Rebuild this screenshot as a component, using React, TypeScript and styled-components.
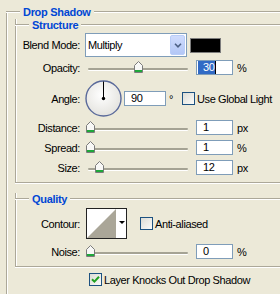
import React from 'react';
import styled, { createGlobalStyle } from 'styled-components';

const GlobalStyle = createGlobalStyle`
  html, body {
    margin: 0;
    padding: 0;
  }
  body {
    width: 280px;
    height: 294px;
    overflow: hidden;
    background: #ece9d8;
    font-family: 'Liberation Sans', Arial, sans-serif;
    font-size: 11px;
    letter-spacing: -0.4px;
    color: #000;
  }
`;

const Page = styled.div`
  box-sizing: border-box;
  height: 294px;
  padding: 11px 0 0 6px;
  display: flex;
  flex-direction: column;
`;

const Group = styled.section<{ $mt?: number; $ml?: number; $open?: boolean }>`
  margin: ${(p) => p.$mt ?? 0}px 0 0 ${(p) => p.$ml ?? 0}px;
  border-left: 1px solid #aca899;
  border-bottom: ${(p) => (p.$open ? 'none' : '1px solid #aca899')};
  box-shadow: inset 1px 0 #fff, 0 1px #fff;
  padding-bottom: ${(p) => (p.$open ? 0 : 7)}px;
  flex: ${(p) => (p.$open ? 1 : 'none')};
`;

const Legend = styled.header`
  display: flex;
  align-items: center;
  height: 12px;
  margin: -5px 0 0 -1px;

  &::before,
  &::after {
    content: '';
    height: 0;
    border-top: 1px solid #aca899;
    border-bottom: 1px solid #fff;
  }
  &::before {
    width: 14px;
  }
  &::after {
    flex: 1;
  }
`;

const LegendText = styled.span`
  padding: 0 3px;
  line-height: 12px;
  font-weight: bold;
  letter-spacing: -0.3px;
  color: #0046d5;
`;

const Row = styled.div<{ $h: number; $mt: number }>`
  display: grid;
  grid-template-columns: 69px 111px 37px 1fr;
  align-items: center;
  height: ${(p) => p.$h}px;
  margin-top: ${(p) => p.$mt}px;
`;

const Label = styled.span`
  text-align: right;
  padding-right: 5px;
  white-space: nowrap;
`;

const Wide = styled.div`
  grid-column: 2 / -1;
  display: flex;
  align-items: center;
`;

const Select = styled.div`
  box-sizing: border-box;
  width: 102px;
  height: 24px;
  padding: 1px;
  border: 1px solid #7f9db9;
  background: #fff;
  display: flex;
  align-items: center;
`;

const SelectValue = styled.span`
  flex: 1;
  padding-left: 1px;
`;

const SelectButton = styled.span`
  box-sizing: border-box;
  width: 15px;
  height: 20px;
  border: 1px solid #b9cdf8;
  border-radius: 2px;
  background: linear-gradient(#cfdcfd, #b3c7f6);
  display: flex;
  align-items: center;
  justify-content: center;
`;

const Swatch = styled.span`
  box-sizing: border-box;
  width: 31px;
  height: 15px;
  margin-left: 3px;
  border: 1px solid #7d7d7d;
  background: #000;
`;

const Field = styled.div<{ $w?: number }>`
  box-sizing: border-box;
  width: ${(p) => p.$w ?? 37}px;
  height: 15px;
  border: 1px solid #7f9db9;
  background: #fff;
  padding-left: 6px;
  line-height: 13px;
  white-space: nowrap;
`;

const SelectedText = styled.span`
  display: inline-block;
  margin-left: -5px;
  padding: 0 1px 0 5px;
  background: #316ac5;
  color: #fff;
  border-right: 1px solid #000;
`;

const Unit = styled.span`
  padding-left: 4px;
`;

const Degree = styled.span`
  margin-left: 3px;
`;

const Slider = styled.div`
  position: relative;
  height: 15px;
`;

const Track = styled.div`
  width: 100px;
  height: 2px;
  margin: 8px 0 0 3px;
  border-radius: 1px;
  background: #a5a394;
  box-shadow: 0 1px #fff;
`;

const Thumb = styled.svg`
  position: absolute;
  top: 1px;
`;

const CheckLabel = styled.label<{ $ml?: number }>`
  display: flex;
  align-items: center;
  margin-left: ${(p) => p.$ml ?? 0}px;
  white-space: nowrap;
`;

const Box = styled.span`
  box-sizing: border-box;
  width: 13px;
  height: 13px;
  margin-right: 2px;
  border: 1px solid #1c5180;
  background: linear-gradient(135deg, #dcdcd5, #fbfbf9);
  display: flex;
  align-items: center;
  justify-content: center;
`;

const ContourBox = styled.div`
  box-sizing: border-box;
  width: 41px;
  height: 31px;
  margin-left: 1px;
  border: 1px solid #222;
  background: #fff;
  display: flex;
`;

const ContourArrow = styled.span`
  margin: 12px 0 0 3px;
  width: 0;
  height: 0;
  border-left: 3px solid transparent;
  border-right: 3px solid transparent;
  border-top: 3px solid #000;
`;

const Footer = styled.div`
  margin: 6px 0 0 82px;
  height: 13px;
  display: flex;
`;

const Check: React.FC<{ label: string; checked?: boolean; ml?: number }> = ({ label, checked, ml }) => (
  <CheckLabel $ml={ml}>
    <Box>
      {checked && (
        <svg width="9" height="9" viewBox="0 0 9 9">
          <path d="M1 4.2 L3.4 6.6 L8 1.8" fill="none" stroke="#21a121" strokeWidth="2" />
        </svg>
      )}
    </Box>
    {label}
  </CheckLabel>
);

const SliderControl: React.FC<{ pos: number }> = ({ pos }) => (
  <Slider>
    <Track />
    <Thumb width="9" height="12" viewBox="0 0 9 12" style={{ left: 1 + pos * 96 }}>
      <path d="M4.5 0.5 L8.5 4.5 V11.5 H0.5 V4.5 Z" fill="#f8f8f6" stroke="#7b7b7b" />
      <rect x="1" y="9" width="7" height="2" fill="#1ea73a" />
    </Thumb>
  </Slider>
);

type SliderRow = { label: string; value: string; unit: string; pos: number; mt: number; selected?: boolean };

const SliderLine: React.FC<SliderRow> = ({ label, value, unit, pos, mt, selected }) => (
  <Row $h={15} $mt={mt}>
    <Label>{label}</Label>
    <SliderControl pos={pos} />
    <Field>{selected ? <SelectedText>{value}</SelectedText> : value}</Field>
    <Unit>{unit}</Unit>
  </Row>
);

const lower: SliderRow[] = [
  { label: 'Distance:', value: '1', unit: 'px', pos: 0, mt: 3 },
  { label: 'Spread:', value: '1', unit: '%', pos: 0, mt: 5 },
  { label: 'Size:', value: '12', unit: 'px', pos: 0.09, mt: 5 },
];

const Dial = () => (
  <svg width="37" height="37" viewBox="0 0 37 37">
    <defs>
      <radialGradient id="dialFill" cx="45%" cy="40%" r="65%">
        <stop offset="0%" stopColor="#ffffff" />
        <stop offset="100%" stopColor="#e2e1dc" />
      </radialGradient>
    </defs>
    <circle cx="18.5" cy="18.5" r="17.5" fill="url(#dialFill)" stroke="#59699a" strokeWidth="1.4" />
    <line x1="18.5" y1="18.5" x2="18.5" y2="1.5" stroke="#000" strokeWidth="1" />
    <circle cx="18.5" cy="18.5" r="1.7" fill="#000" />
  </svg>
);

export default function App() {
  return (
    <>
      <GlobalStyle />
      <Page>
        <Group $open>
          <Legend>
            <LegendText>Drop Shadow</LegendText>
          </Legend>

          <Group $mt={6} $ml={8}>
            <Legend>
              <LegendText>Structure</LegendText>
            </Legend>
            <Row $h={24} $mt={2}>
              <Label>Blend Mode:</Label>
              <Wide>
                <Select>
                  <SelectValue>Multiply</SelectValue>
                  <SelectButton>
                    <svg width="8" height="5" viewBox="0 0 8 5">
                      <path d="M1 0.8 L4 3.8 L7 0.8" fill="none" stroke="#4d6185" strokeWidth="1.6" />
                    </svg>
                  </SelectButton>
                </Select>
                <Swatch />
              </Wide>
            </Row>
            <SliderLine label="Opacity:" value="30" unit="%" pos={0.5} mt={3} selected />
            <Row $h={37} $mt={5}>
              <Label>Angle:</Label>
              <Wide>
                <Dial />
                <Field $w={42} style={{ marginLeft: 2 }}>90</Field>
                <Degree>°</Degree>
                <Check label="Use Global Light" ml={9} />
              </Wide>
            </Row>
            {lower.map((r) => (
              <SliderLine key={r.label} {...r} />
            ))}
          </Group>

          <Group $mt={15} $ml={8}>
            <Legend>
              <LegendText>Quality</LegendText>
            </Legend>
            <Row $h={31} $mt={3}>
              <Label>Contour:</Label>
              <Wide>
                <ContourBox>
                  <svg width="29" height="29" viewBox="0 0 29 29">
                    <polygon points="0,29 29,0 29,29" fill="#aaa698" />
                  </svg>
                  <ContourArrow />
                </ContourBox>
                <Check label="Anti-aliased" ml={13} />
              </Wide>
            </Row>
            <SliderLine label="Noise:" value="0" unit="%" pos={0} mt={5} />
          </Group>

          <Footer>
            <Check label="Layer Knocks Out Drop Shadow" checked />
          </Footer>
        </Group>
      </Page>
    </>
  );
}
